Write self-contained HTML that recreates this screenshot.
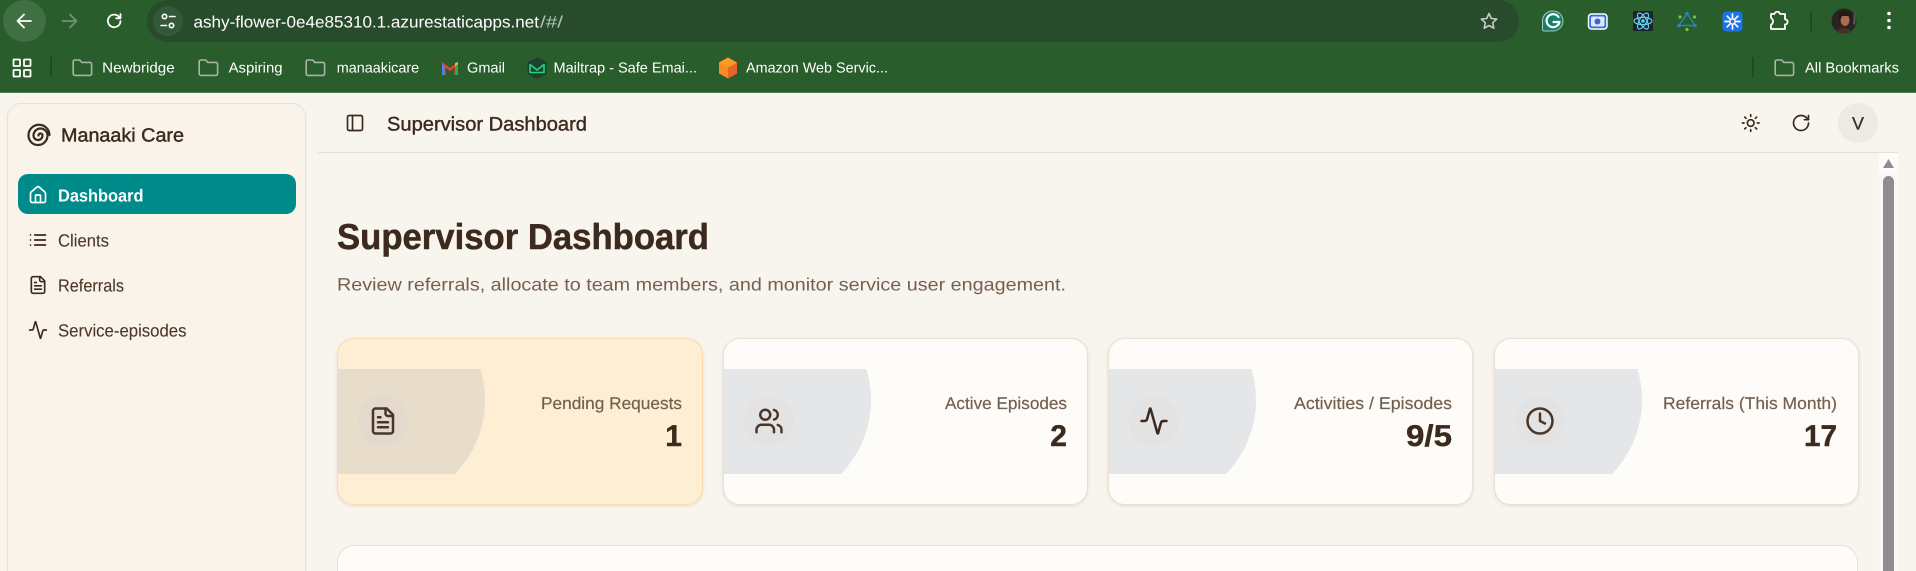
<!DOCTYPE html>
<html lang="en"><head><meta charset="utf-8"><title>Supervisor Dashboard</title>
<style>
html,body{margin:0;padding:0;width:1916px;height:571px;overflow:hidden;background:#f8f4ee}
body{position:relative;font-family:"Liberation Sans",sans-serif}
#v{position:absolute;left:0;top:0;width:1916px;height:571px;overflow:hidden}
.b{position:absolute;box-sizing:border-box}
.chrome{left:0;top:0;width:1916px;height:93px;background:#295d2b;border-bottom:1px solid #4f7f55}
.omni{left:147px;top:0;width:1372px;height:42px;background:#274b2b;border-radius:21px}
.back{left:3px;top:0;width:43px;height:42px;background:#3f6f42;border-radius:50%}
.site{left:153px;top:6px;width:30px;height:30px;background:#33593a;border-radius:50%}
.side{left:7px;top:103px;width:299px;height:468px;background:#f9f3ea;border:1px solid #e8e2d6;border-bottom:0;border-radius:14px 14px 0 0;box-shadow:0 1px 2px rgba(80,60,30,.06)}
.pill{left:18px;top:174px;width:278px;height:40px;background:#008b8b;border-radius:10px}
.hline{left:318px;top:152px;width:1580px;height:1px;background:#e6e1d6}
.track{left:1879px;top:153px;width:19px;height:418px;background:#fbf8f4}
.sbtn{left:1879px;top:153px;width:19px;height:19px;background:#fdfcfb}
.thumb{left:1883px;top:176px;width:11px;height:395px;background:#8e8e8e;border-radius:6px 6px 0 0}
.card{top:338px;height:167px;background:#fdfcf8;border:1px solid #e8e0d5;border-radius:17px;box-shadow:0 1px 3px rgba(80,60,30,.12);overflow:hidden}
.card.w{background:#feeed4;border-color:#fcdcab}
.band{left:0;top:30px;width:147px;height:105px;overflow:hidden}
.band i{position:absolute;left:-65px;top:-75px;width:212px;height:212px;border-radius:50%;background:#e5e6e8}
.w .band i{background:#e8ddcb}
.ico{left:20px;top:57px;width:50px;height:50px;border-radius:50%;background:#e3e3e3}
.w .ico{background:#e3d9cc}
.big{left:337px;top:545px;width:1521px;height:26px;background:#fdfcf8;border:1px solid #e8e0d5;border-bottom:0;border-radius:17px 17px 0 0}
svg.o{position:absolute;left:0;top:0}
text{font-family:"Liberation Sans",sans-serif;text-rendering:geometricPrecision}
.i{fill:none;stroke-linecap:round;stroke-linejoin:round}
</style></head><body>
<div id="v">
<div class="b chrome"></div>
<div class="b omni"></div>
<div class="b back"></div>
<div class="b site"></div>
<div class="b side"></div>
<div class="b pill"></div>
<div class="b hline"></div>
<div class="b track"></div>
<div class="b sbtn"></div>
<div class="b thumb"></div>
<div class="b card w" style="left:337px;width:366px"><div class="b band"><i></i></div><div class="b ico"></div></div>
<div class="b card" style="left:723px;width:365px"><div class="b band"><i></i></div><div class="b ico"></div></div>
<div class="b card" style="left:1108px;width:365px"><div class="b band"><i></i></div><div class="b ico"></div></div>
<div class="b card" style="left:1494px;width:365px"><div class="b band"><i></i></div><div class="b ico"></div></div>
<div class="b big"></div>

<svg class="o" width="1916" height="571" viewBox="0 0 1916 571" xmlns="http://www.w3.org/2000/svg">
<defs>
<g id="folder"><path class="i" d="M1.2 3.2a1.7 1.7 0 0 1 1.7-1.7h4.8l2.2 2.4h8a1.7 1.7 0 0 1 1.7 1.7v9.6a1.7 1.7 0 0 1-1.7 1.7H2.9a1.7 1.7 0 0 1-1.7-1.7z" stroke="#a9b3a8" stroke-width="1.6"/></g>
<g id="ifile"><path d="M15 2H6a2 2 0 0 0-2 2v16a2 2 0 0 0 2 2h12a2 2 0 0 0 2-2V7Z"/><path d="M14 2v4a2 2 0 0 0 2 2h4"/><path d="M10 9H8"/><path d="M16 13H8"/><path d="M16 17H8"/></g>
<g id="iact"><path d="M22 12h-2.48a2 2 0 0 0-1.93 1.46l-2.35 8.36a.25.25 0 0 1-.48 0L9.24 2.18a.25.25 0 0 0-.48 0l-2.35 8.36A2 2 0 0 1 4.49 12H2"/></g>
</defs>

<!-- toolbar nav -->
<path class="i" d="M31 21H18M24 14.5 17.5 21l6.5 6.5" stroke="#fff" stroke-width="1.8"/>
<path class="i" d="M62.5 21h13.500M70 14.5 76.5 21 70 27.5" stroke="#6f9472" stroke-width="1.8"/>
<path class="i" d="M120.5 21a6.3 6.3 0 1 1-1.8-4.500L120.5 18.300M120.5 14v4.300h-4.300" stroke="#fff" stroke-width="1.8"/>
<g class="i" stroke="#fff" stroke-width="1.6"><circle cx="164.500" cy="16.500" r="2.200"/><path d="M169.5 16.5h5.500M161 25.500h5.500"/><circle cx="171.500" cy="25.500" r="2.200"/></g>
<text x="193.500" y="27.500" font-size="16.500" fill="#fff" textLength="345.500" lengthAdjust="spacingAndGlyphs">ashy-flower-0e4e85310.1.azurestaticapps.net</text>
<text x="540" y="27.500" font-size="16.500" fill="#b5c4b6" textLength="23" lengthAdjust="spacingAndGlyphs">/#/</text>
<path class="i" d="M1489 13.500l2.300 5 5.400.6-4 3.700 1.100 5.400-4.800-2.700-4.800 2.700 1.100-5.400-4-3.700 5.400-.6z" stroke="#c3ccc3" stroke-width="1.6"/>

<!-- extensions -->
<path d="M1553 11a10 10 0 1 1 0 20h-9a1.5 1.5 0 0 1-1.5-1.500V21a10 10 0 0 1 10.500-10z" fill="#15806a" stroke="#a7c9bb" stroke-width="1"/>
<path class="i" d="M1558.5 17a6.500 6.500 0 1 0 1 5h-6" stroke="#fff" stroke-width="2.2"/>
<rect x="1588.500" y="14" width="18.500" height="15" rx="3" fill="#2b6fe0" stroke="#fff" stroke-width="1.5"/>
<rect x="1591" y="16.500" width="13.500" height="10" rx="1.5" fill="#dfe8fb"/>
<circle cx="1597.500" cy="21.500" r="3" fill="#4c5fd0"/>
<rect x="1633" y="11" width="20" height="20" rx="1.5" fill="#20232a"/>
<g fill="none" stroke="#5ccfee" stroke-width="1.2"><ellipse cx="1643" cy="21" rx="9" ry="3.600"/><ellipse cx="1643" cy="21" rx="9" ry="3.600" transform="rotate(60 1643 21)"/><ellipse cx="1643" cy="21" rx="9" ry="3.600" transform="rotate(120 1643 21)"/></g><circle cx="1643" cy="21" r="1.800" fill="#5ccfee"/>
<path d="M1687 13.500 1695 25.500H1679Z" fill="none" stroke="#2d82b7" stroke-width="1.4"/>
<g fill="#2d82b7"><circle cx="1687" cy="13.500" r="1.800"/><circle cx="1679" cy="25.500" r="1.800"/><circle cx="1695" cy="25.500" r="1.800"/></g>
<g fill="#7ac143"><circle cx="1680" cy="17" r="1.600"/><circle cx="1694.500" cy="17" r="1.600"/><circle cx="1687" cy="29.500" r="1.600"/></g>
<rect x="1722.500" y="11.500" width="20" height="20" rx="4" fill="#1a73e8"/>
<g stroke="#fff" stroke-width="1.7" stroke-linecap="round"><path d="M1732.5 14v15M1725 21.500h15M1727.2 16.200l10.600 10.600M1737.8 16.200l-10.600 10.600"/></g><circle cx="1732.500" cy="21.500" r="2.500" fill="#1a73e8" stroke="#fff" stroke-width="1.3"/>
<path class="i" d="M1771 14h3.500a2.800 2.800 0 0 1 5.500 0h5v5.300a2.600 2.600 0 0 1 0 5.200V29h-14v-4.300a3.800 3.800 0 0 0 0-6.700z" stroke="#fff" stroke-width="1.8"/>
<rect x="1810" y="11" width="2" height="20" fill="#1f4a22"/>
<circle cx="1844" cy="21" r="12.500" fill="#2a2320"/>
<ellipse cx="1845" cy="20" rx="4.500" ry="6" fill="#a86b50"/>
<path d="M1839 13q6-5 12 0l1 8-3-5h-7l-3 7z" fill="#231a18"/>
<path d="M1836 31q8-6 16 0l-4 2.500h-8z" fill="#4a2d2a"/>
<path d="M1854 12q3 5 1 13l-2-1z" fill="#555553"/>
<g fill="#fff"><circle cx="1889" cy="13.500" r="1.800"/><circle cx="1889" cy="20.500" r="1.800"/><circle cx="1889" cy="27.500" r="1.800"/></g>

<!-- bookmarks bar -->
<g fill="none" stroke="#fff" stroke-width="1.8"><rect x="13.500" y="59.500" width="6.500" height="6.500" rx=".5"/><rect x="24" y="59.500" width="6.500" height="6.500" rx=".5"/><rect x="13.500" y="70" width="6.500" height="6.500" rx=".5"/><rect x="24" y="70" width="6.500" height="6.500" rx=".5"/></g>
<rect x="50" y="57" width="2" height="20" fill="#1f4a22"/>
<use href="#folder" transform="translate(72 58.500)"/>
<text x="102.200" y="72.500" font-size="14.500" fill="#fff" textLength="72.500" lengthAdjust="spacingAndGlyphs">Newbridge</text>
<use href="#folder" transform="translate(198 58.500)"/>
<text x="228.600" y="72.500" font-size="14.500" fill="#fff" textLength="54" lengthAdjust="spacingAndGlyphs">Aspiring</text>
<use href="#folder" transform="translate(305 58.500)"/>
<text x="336.700" y="72.500" font-size="14.500" fill="#fff" textLength="82.500" lengthAdjust="spacingAndGlyphs">manaakicare</text>
<path d="M442 75V62l8 6 8-6v13h-3.500v-7.500L450 71l-4.500-3.500V75z" fill="#ea4335"/>
<path d="M442 64v11h2.500v-9z" fill="#4285f4"/><path d="M458 64v11h-2.500v-9z" fill="#34a853"/><path d="M455 66.500 458 64v-2l-3 1z" fill="#fbbc04"/>
<text x="467" y="72.500" font-size="14.500" fill="#fff" textLength="38" lengthAdjust="spacingAndGlyphs">Gmail</text>
<path d="M537 57.500 546.500 62v12l-9.500 5-9.500-5V62z" fill="#1f3f33"/>
<path class="i" d="M530 64.500l7 5.500 7-5.500v8h-14z" stroke="#22d67a" stroke-width="1.6"/>
<text x="553.500" y="72.500" font-size="14.500" fill="#fff" textLength="143.500" lengthAdjust="spacingAndGlyphs">Mailtrap - Safe Emai...</text>
<path d="M728 57.500l9 5v11l-9 5-9-5v-11z" fill="#fb8a25"/>
<path d="M728 67.500l9-5v11l-9 5z" fill="#e8652a"/>
<path d="M728 57.500l9 5-9 5-9-5z" fill="#fd9a26"/>
<text x="746" y="72.500" font-size="14.500" fill="#fff" textLength="142" lengthAdjust="spacingAndGlyphs">Amazon Web Servic...</text>
<rect x="1752" y="57" width="2" height="20" fill="#1f4a22"/>
<use href="#folder" transform="translate(1774 58.500)"/>
<text x="1805" y="72.500" font-size="14.500" fill="#fff" textLength="94" lengthAdjust="spacingAndGlyphs">All Bookmarks</text>

<!-- sidebar -->
<path class="i" d="M38.5 135.500A2 2 0 0 1 42.5 135.500A4.5 4.5 0 0 1 33.5 135.500A7 7 0 0 1 47.5 135.500 9.5 9.5 0 0 1 28.5 135.500 10.5 10.5 0 0 1 49.5 135" stroke="#3d2a1e" stroke-width="2.2"/>
<text x="61" y="141.500" font-size="19" fill="#3d2a1e" stroke="#3d2a1e" stroke-width=".45" textLength="123" lengthAdjust="spacingAndGlyphs">Manaaki Care</text>
<g transform="translate(28 185) scale(.8333)" class="i" stroke="#fff" stroke-width="2"><path d="M15 21v-8a1 1 0 0 0-1-1h-4a1 1 0 0 0-1 1v8"/><path d="M3 10a2 2 0 0 1 .709-1.528l7-5.999a2 2 0 0 1 2.582 0l7 5.999A2 2 0 0 1 21 10v9a2 2 0 0 1-2 2H5a2 2 0 0 1-2-2z"/></g>
<text x="58" y="201.500" font-size="17.500" font-weight="700" fill="#fff" textLength="85.500" lengthAdjust="spacingAndGlyphs">Dashboard</text>
<g transform="translate(28 230) scale(.8333)" class="i" stroke="#3d2a1e" stroke-width="2"><path d="M3 12h.01M3 18h.01M3 6h.01M8 12h13M8 18h13M8 6h13"/></g>
<text x="58" y="246.500" font-size="17.500" fill="#4b3829" stroke="#4b3829" stroke-width=".1" textLength="51" lengthAdjust="spacingAndGlyphs">Clients</text>
<g transform="translate(28 275) scale(.8333)" class="i" stroke="#3d2a1e" stroke-width="2"><use href="#ifile"/></g>
<text x="58" y="291.500" font-size="17.500" fill="#4b3829" stroke="#4b3829" stroke-width=".1" textLength="66" lengthAdjust="spacingAndGlyphs">Referrals</text>
<g transform="translate(28 320) scale(.8333)" class="i" stroke="#3d2a1e" stroke-width="2"><use href="#iact"/></g>
<text x="58" y="336.500" font-size="17.500" fill="#4b3829" stroke="#4b3829" stroke-width=".1" textLength="128.500" lengthAdjust="spacingAndGlyphs">Service-episodes</text>

<!-- header -->
<g transform="translate(345 113) scale(.8333)" class="i" stroke="#3d2a1e" stroke-width="2"><rect x="3" y="3" width="18" height="18" rx="2"/><path d="M9 3v18"/></g>
<text x="387" y="130.500" font-size="19.500" fill="#3d2a1e" stroke="#3d2a1e" stroke-width=".4" textLength="200" lengthAdjust="spacingAndGlyphs">Supervisor Dashboard</text>
<g transform="translate(1740.700 113) scale(.8333)" class="i" stroke="#3d2a1e" stroke-width="2"><circle cx="12" cy="12" r="4"/><path d="M12 2v2M12 20v2M4.93 4.93l1.41 1.41M17.66 17.66l1.41 1.41M2 12h2M20 12h2M6.34 17.66l-1.41 1.41M19.07 4.93l-1.41 1.41"/></g>
<g transform="translate(1791 113) scale(.8333)" class="i" stroke="#3d2a1e" stroke-width="2"><path d="M21 12a9 9 0 1 1-9-9c2.52 0 4.93 1 6.74 2.74L21 8"/><path d="M21 3v5h-5"/></g>
<circle cx="1858" cy="123" r="20" fill="#edeae4"/>
<text x="1858" y="129.500" font-size="18" fill="#3d2a1e" stroke="#3d2a1e" stroke-width=".25" text-anchor="middle">V</text>

<!-- heading -->
<text x="337" y="249" font-size="36" font-weight="700" fill="#3d2a1e" stroke="#3d2a1e" stroke-width=".5" textLength="372" lengthAdjust="spacingAndGlyphs">Supervisor Dashboard</text>
<text x="337" y="290.500" font-size="18" fill="#75604f" textLength="729" lengthAdjust="spacingAndGlyphs">Review referrals, allocate to team members, and monitor service user engagement.</text>

<!-- scroll arrow -->
<path d="M1888.5 159 1894 168H1883Z" fill="#8e8e8e"/>

<!-- card icons -->
<g transform="translate(368 406) scale(1.25)" class="i" stroke="#4a3628" stroke-width="2"><use href="#ifile"/></g>
<g transform="translate(754 406) scale(1.25)" class="i" stroke="#4a3628" stroke-width="2"><path d="M16 21v-2a4 4 0 0 0-4-4H6a4 4 0 0 0-4 4v2"/><circle cx="9" cy="7" r="4"/><path d="M22 21v-2a4 4 0 0 0-3-3.87"/><path d="M16 3.13a4 4 0 0 1 0 7.75"/></g>
<g transform="translate(1139 406) scale(1.25)" class="i" stroke="#3d2a1e" stroke-width="2"><use href="#iact"/></g>
<g transform="translate(1525 406) scale(1.25)" class="i" stroke="#4a3628" stroke-width="2"><circle cx="12" cy="12" r="10"/><path d="M12 6v6l4 2"/></g>

<!-- card text -->
<text x="541" y="409" font-size="17" fill="#75604f" stroke="#75604f" stroke-width=".2" textLength="141" lengthAdjust="spacingAndGlyphs">Pending Requests</text>
<text x="665.300" y="446" font-size="30" font-weight="700" fill="#3d2a1e" stroke="#3d2a1e" stroke-width=".4">1</text>
<text x="945" y="409" font-size="17" fill="#75604f" stroke="#75604f" stroke-width=".2" textLength="122" lengthAdjust="spacingAndGlyphs">Active Episodes</text>
<text x="1050.300" y="446" font-size="30" font-weight="700" fill="#3d2a1e" stroke="#3d2a1e" stroke-width=".4">2</text>
<text x="1294" y="409" font-size="17" fill="#75604f" stroke="#75604f" stroke-width=".2" textLength="158" lengthAdjust="spacingAndGlyphs">Activities / Episodes</text>
<text x="1406" y="446" font-size="30" font-weight="700" fill="#3d2a1e" stroke="#3d2a1e" stroke-width=".4" textLength="46" lengthAdjust="spacingAndGlyphs">9/5</text>
<text x="1663" y="409" font-size="17" fill="#75604f" stroke="#75604f" stroke-width=".2" textLength="174" lengthAdjust="spacingAndGlyphs">Referrals (This Month)</text>
<text x="1804" y="446" font-size="30" font-weight="700" fill="#3d2a1e" stroke="#3d2a1e" stroke-width=".4" textLength="33" lengthAdjust="spacingAndGlyphs">17</text>
</svg>
</div>
</body></html>
